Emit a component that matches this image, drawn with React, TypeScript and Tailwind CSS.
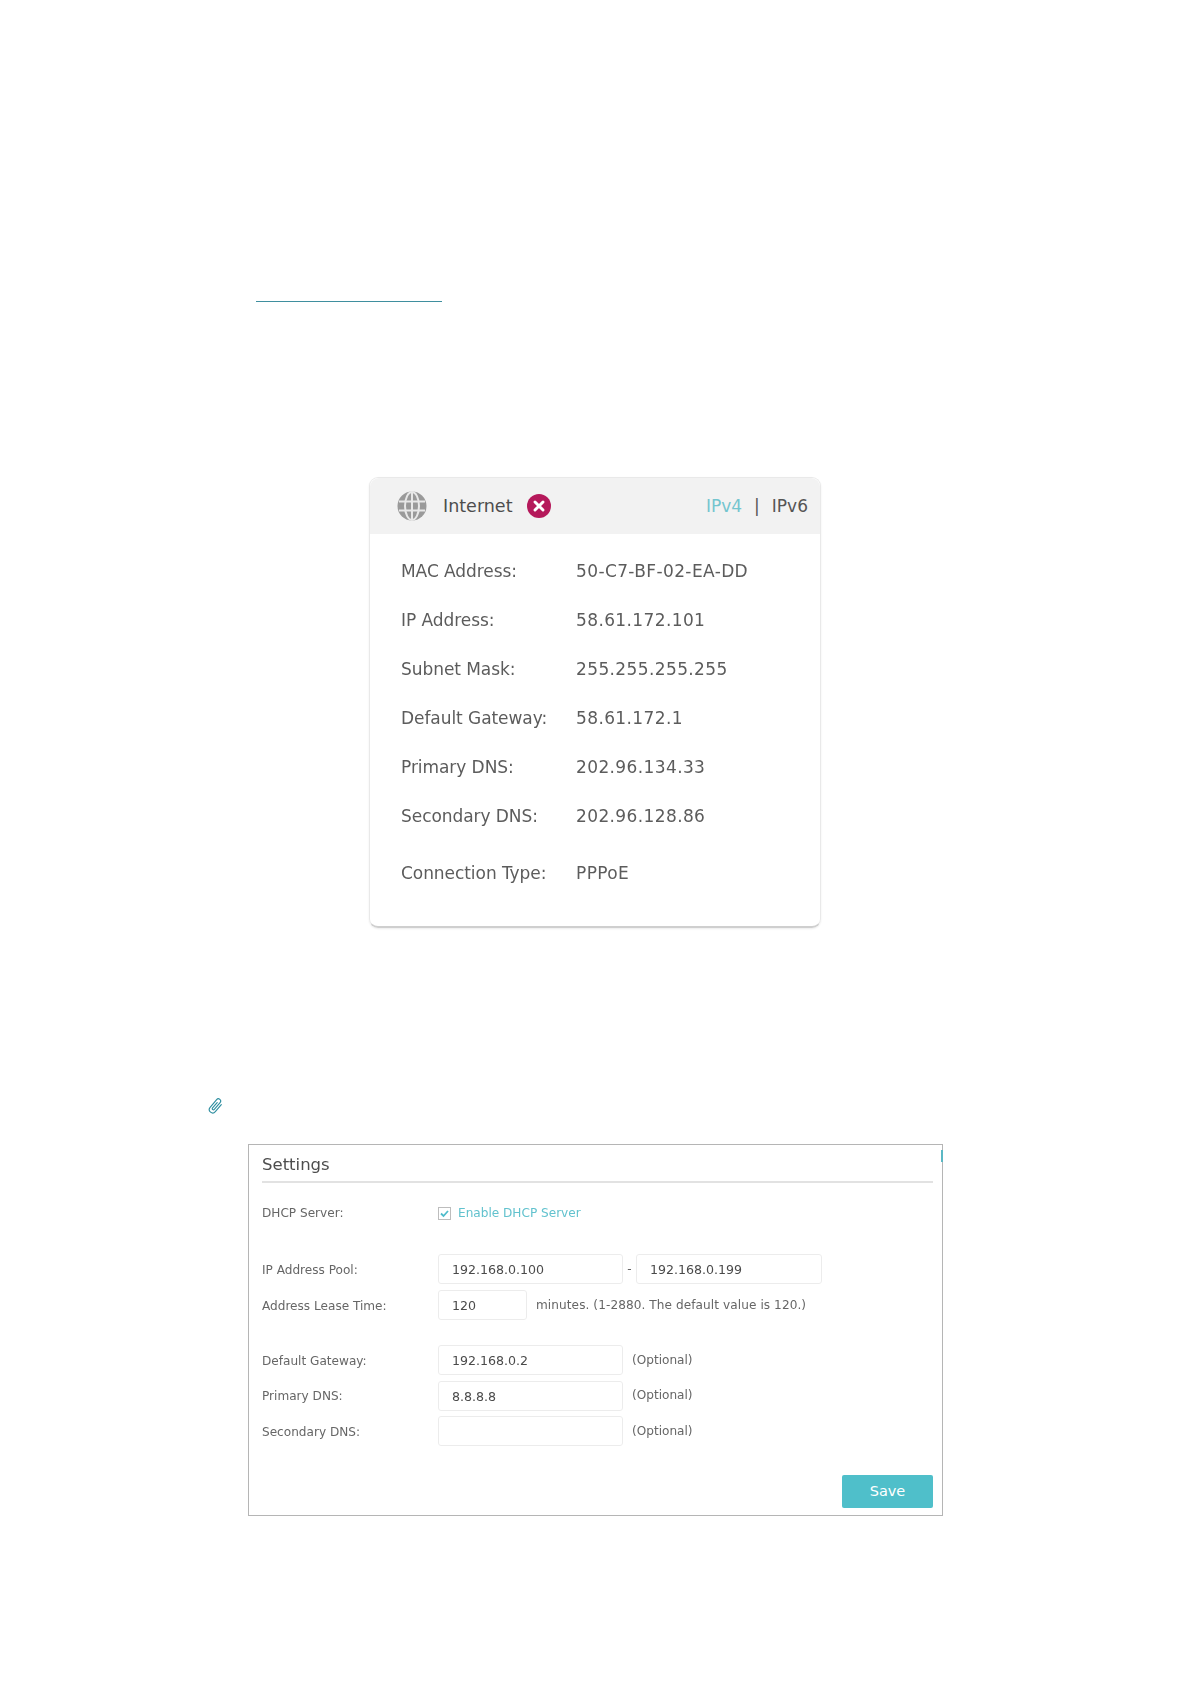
import React from "react";

const font = { fontFamily: '"DejaVu Sans", Verdana, sans-serif' };

function CardRow({ label, value, className = "" }: { label: string; value: string; className?: string }) {
  return (
    <div className={`flex h-[49px] items-center pt-[1px] text-[17px] text-[#5c5c5c] ${className}`}>
      <span className="w-[175px] shrink-0 tracking-[-0.06px]">{label}</span>
      <span className="tracking-[0.38px]">{value}</span>
    </div>
  );
}

function Field({ label, value, w = "w-[185px]", note, noteClass = "" }: { label: string; value: string; w?: string; note?: string; noteClass?: string }) {
  return (
    <div className="flex h-[30px] items-center text-[12.1px] text-[#666]">
      <span className="w-[176px] shrink-0 translate-y-[1px]">{label}</span>
      <div className={`${w} h-[30px] shrink-0 rounded-[3px] border border-[#ececec] pl-[13px] text-[12.6px] leading-[29px] text-[#4a4a4a]`}>{value}</div>
      {note && <span className={`ml-[9px] ${noteClass}`}>{note}</span>}
    </div>
  );
}

export default function App() {
  return (
    <div className="relative h-[1684px] w-[1190px] overflow-hidden bg-white pt-[301px]" style={font}>
      <div className="ml-[256px] h-px w-[186px] bg-[#3f8f9f]" />

      <section className="ml-[369px] mt-[175px] h-[451px] w-[452px] rounded-[9px] border border-[#e9e9e9] border-b-2 border-b-[#cfcfcf] shadow-[0_1px_2px_rgba(0,0,0,0.08)] blur-[0.35px]">
        <header className="flex h-[56px] items-center rounded-t-[9px] bg-[#f2f2f2] pl-[27px] pr-[12px] text-[#555]">
          <svg width="30" height="30" viewBox="0 0 30 30" className="shrink-0">
            <circle cx="15" cy="15" r="14.5" fill="#9a9a9a" />
            <g fill="none" stroke="#e8e8e8" strokeWidth="2">
              <ellipse cx="15" cy="15" rx="7" ry="14" />
              <path d="M15 1v28M2 10.5h26M2 19.5h26" />
            </g>
          </svg>
          <span className="ml-[16px] text-[17.5px] text-[#4d4d4d]">Internet</span>
          <svg width="24" height="24" viewBox="0 0 24 24" className="ml-[14px] shrink-0">
            <circle cx="12" cy="12" r="12" fill="#b5195b" />
            <path d="M8 8l8 8M16 8l-8 8" stroke="#fff" strokeWidth="3" strokeLinecap="round" />
          </svg>
          <div className="ml-auto flex translate-y-[1px] items-center text-[17px]">
            <span className="text-[#74c5cf]">IPv4</span>
            <span className="mx-[12px] text-[#555]">|</span>
            <span>IPv6</span>
          </div>
        </header>
        <div className="pl-[31px] pt-[13px]">
          <CardRow label="MAC Address:" value="50-C7-BF-02-EA-DD" />
          <CardRow label="IP Address:" value="58.61.172.101" />
          <CardRow label="Subnet Mask:" value="255.255.255.255" />
          <CardRow label="Default Gateway:" value="58.61.172.1" />
          <CardRow label="Primary DNS:" value="202.96.134.33" />
          <CardRow label="Secondary DNS:" value="202.96.128.86" />
          <CardRow label="Connection Type:" value="PPPoE" className="mt-[8px]" />
        </div>
      </section>

      <svg width="18" height="18" viewBox="0 0 16 16" className="ml-[207px] mt-[169px] block" fill="none" stroke="#2e8ea0" strokeWidth="1" strokeLinecap="round">
        <g transform="rotate(40 8 8)">
          <path d="M10.8 4v8.3a3 3 0 0 1-6 0V3.3a2 2 0 0 1 4 0v8a1 1 0 0 1-2 0V5" />
        </g>
      </svg>

      <section className="relative ml-[248px] mt-[29px] h-[372px] w-[695px] border border-[#b5b5b5] px-[13px] blur-[0.3px]">
        <span className="absolute right-[-1px] top-[5px] h-[12px] w-[2px] bg-[#5bb8c4]" />
        <h2 className="flex h-[38px] w-[671px] items-center border-b-2 border-[#e2e2e2] pt-[4px] text-[16.5px] text-[#4d4d4d]">Settings</h2>
        <div className="mt-[20px] flex h-[20px] items-center text-[12.1px] text-[#666]">
          <span className="w-[176px] shrink-0">DHCP Server:</span>
          <span className="flex h-[13px] w-[13px] items-center justify-center border border-[#bdbdbd]">
            <svg width="9" height="9" viewBox="0 0 9 9" fill="none" stroke="#4fbccb" strokeWidth="1.8"><path d="M1 4.5 3.5 7 8 2" /></svg>
          </span>
          <span className="ml-[7px] text-[#62c2ce]">Enable DHCP Server</span>
        </div>

        <div className="mt-[31px] flex h-[30px] items-center text-[12.1px] text-[#666]">
          <span className="w-[176px] shrink-0 translate-y-[1px]">IP Address Pool:</span>
          <div className="h-[30px] w-[185px] rounded-[3px] border border-[#ececec] pl-[13px] text-[12.6px] leading-[29px] text-[#4a4a4a]">192.168.0.100</div>
          <span className="w-[13px] text-center">-</span>
          <div className="h-[30px] w-[186px] rounded-[3px] border border-[#ececec] pl-[13px] text-[12.6px] leading-[29px] text-[#4a4a4a]">192.168.0.199</div>
        </div>
        <div className="mt-[6px]">
          <Field label="Address Lease Time:" value="120" w="w-[89px]" note="minutes. (1-2880. The default value is 120.)" noteClass="tracking-[0.08px]" />
        </div>
        <div className="mt-[25px] flex flex-col gap-[5.5px]">
          <Field label="Default Gateway:" value="192.168.0.2" note="(Optional)" />
          <Field label="Primary DNS:" value="8.8.8.8" note="(Optional)" />
          <Field label="Secondary DNS:" value="" note="(Optional)" />
        </div>
        <button className="absolute bottom-[7px] right-[9px] h-[33px] w-[91px] rounded-[2px] bg-[#4fbfca] text-[14.5px] text-white">Save</button>
      </section>
    </div>
  );
}
